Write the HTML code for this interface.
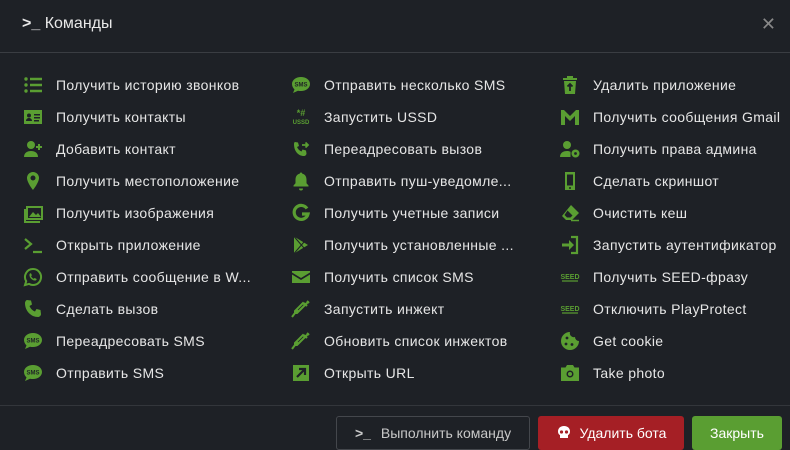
<!DOCTYPE html><html><head><meta charset="utf-8"><style>
*{margin:0;padding:0;box-sizing:border-box}
body{width:790px;height:448px;background:#1e2126;font-family:"Liberation Sans",sans-serif;color:#e6e6e6;position:relative;overflow:hidden}
.hd{position:absolute;left:22px;top:15px;font-size:16px;color:#e8e8e8}
.x{position:absolute;right:14px;top:14px;color:#888;font-size:18px}
.l1{position:absolute;left:0;right:0;top:52px;border-top:1px solid #3a3d42}
.l2{position:absolute;left:0;right:0;top:405px;border-top:1px solid #33363b}
.it{position:absolute;font-size:14px;letter-spacing:0.35px;height:20px;line-height:20px;white-space:nowrap}
.ic{position:absolute;width:24px;height:20px;display:flex;align-items:center;justify-content:center}
.ic svg{fill:#5a9e32;stroke:#5a9e32}
.b{position:absolute;top:416px;height:34px;border-radius:3px;font-size:14px;display:flex;align-items:center;justify-content:center;color:#fff}
</style></head><body>
<div class="hd"><span style="font-weight:bold">&gt;_</span> Команды</div>
<div class="x">✕</div>
<div class="l1"></div>
<div id="g"></div>
<div class="l2"></div>
<div class="b" style="left:336px;width:194px;border:1px solid #44474c;color:#c8c8c8;background:#1e2126"><b style="margin-right:10px">&gt;_</b>Выполнить команду</div>
<div class="b" style="left:538px;width:146px;background:#a51f25"><svg width="16" height="16" viewBox="0 0 16 16" style="margin-right:8px"><path fill="#fff" d="M8 1C4 1 2 3.5 2 6.5c0 2 1 3 2 3.6V13h8V10.1c1-.6 2-1.6 2-3.6C14 3.5 12 1 8 1z"/><circle cx="5.5" cy="7" r="1.6" fill="#a51f25"/><circle cx="10.5" cy="7" r="1.6" fill="#a51f25"/></svg>Удалить бота</div>
<div class="b" style="left:692px;width:90px;background:#5a9e32">Закрыть</div>
<script>
const I={
list:'<g stroke="none"><circle cx="3" cy="4" r="1.7"/><circle cx="3" cy="10" r="1.7"/><circle cx="3" cy="16" r="1.7"/></g><path stroke-width="2.4" d="M7 4h12M7 10h12M7 16h12"/>',
card:'<path stroke="none" d="M1 3h18v14H1z"/><g fill="#1e2126" stroke="none"><circle cx="6" cy="8.5" r="2"/><path d="M3 14c0-2 1.5-3 3-3s3 1 3 3zM11 7h6v1.5h-6zM11 10h6v1.5h-6zM11 13h5v1.5h-5z"/></g>',
uplus:'<g stroke="none"><circle cx="8" cy="6" r="4"/><path d="M1 18c0-4 3-6 7-6s7 2 7 6z"/></g><path stroke-width="2" d="M16 5v6M13 8h6"/>',
pin:'<path stroke="none" d="M10 1a6 6 0 0 0-6 6c0 4.5 6 12 6 12s6-7.5 6-12a6 6 0 0 0-6-6zm0 8.5a2.5 2.5 0 1 1 0-5 2.5 2.5 0 0 1 0 5z"/>',
img:'<path fill="none" stroke-width="2" d="M4 4h15v12H4z"/><path stroke="none" d="M1 6h2v12h14v2H1z M6 14l4-5 3 3 2-2 3 4z"/>',
term:'<path fill="none" stroke-width="2.2" d="M2 4l6 5-6 5M10 17h9"/>',
wa:'<path fill="none" stroke-width="2" d="M10 2a8 8 0 0 0-6.8 12.2L2 18l4-1.1A8 8 0 1 0 10 2z"/><path stroke="none" d="M7 6.5c.5-.5 1-.3 1.3.4l.6 1.4-.8 1c.6 1.2 1.5 2 2.6 2.5l1-.8 1.5.7c.6.3.5.9 0 1.4-1.5 1.3-4.5-.5-5.6-2S6 7.5 7 6.5z"/>',
phone:'<path stroke="none" d="M4 1l4 .5 1 4-2.5 1.5c1 2.5 3 4.5 5.5 5.5L13.5 10l4 1 .5 4c0 2-2 3-3 3C8 18 2 12 2 4c0-1 1-3 2-3z"/>',
sms:'<path stroke="none" d="M10 2c5 0 9 3 9 7s-4 7-9 7c-1 0-2 0-3-.3L2 18l1.5-3.5C2 13 1 11 1 9c0-4 4-7 9-7z"/><text x="10" y="11.5" font-size="6" font-weight="bold" text-anchor="middle" fill="#1e2126" stroke="none" font-family="Liberation Sans">SMS</text>',
ussd:'<text x="10" y="9" font-size="9" font-weight="bold" text-anchor="middle" stroke="none" font-family="Liberation Sans">*#</text><text x="10" y="17" font-size="6" font-weight="bold" text-anchor="middle" stroke="none" font-family="Liberation Sans">USSD</text>',
fwd:'<path stroke="none" d="M4 3l3 .5 1 3.5-2 1c.8 2 2.5 3.7 4.5 4.5l1-2 3.5 1 .5 3c0 1.5-1.5 2.5-2.5 2.5C7 17 3 12 3 5c0-1 .5-2 1-2z"/><path fill="none" stroke-width="1.8" d="M11 6h6M14.5 3.5L17 6l-2.5 2.5"/>',
bell:'<path stroke="none" d="M10 1.5c.8 0 1.3.6 1.3 1.3 3 .6 4.2 3 4.2 6v3.5l2 2.2v1H2.5v-1l2-2.2V8.8c0-3 1.2-5.4 4.2-6 0-.7.5-1.3 1.3-1.3zM8 17.5h4a2 2 0 0 1-4 0z"/>',
g:'<path fill="none" stroke-width="3.2" d="M16 5.5A7 7 0 1 0 17 11h-6"/>',
play:'<path stroke="none" d="M3 1.5l14 8.5-14 8.5z"/><path fill="#1e2126" stroke="#1e2126" stroke-width="1" d="M3 1.5L13 13M3 18.5L13 7"/>',
mail:'<path stroke="none" d="M1 4h18v1.5L10 11 1 5.5zM1 7.5l9 5.5 9-5.5V16H1z"/>',
syr:'<path fill="none" stroke-width="2" d="M16 2l2 2M17 3l-3 3M13 4l3 3M14 6l-8 8H4v-2l8-8zM4 14l-3 4"/><path stroke="none" d="M6 10l2 2-2 2-2-2z"/>',
ext:'<path stroke="none" d="M2 2h16v16H2z"/><path fill="none" stroke="#1e2126" stroke-width="2.2" d="M6 14l7-7M8 6h6v6"/>',
trash:'<path stroke="none" d="M7 1h6v2h4v2H3V3h4zM4 6h12l-1 13H5z"/><path fill="none" stroke="#1e2126" stroke-width="1.8" d="M10 16V9M7.5 11.5L10 9l2.5 2.5"/>',
gm:'<path stroke="none" d="M1 3h3l6 6 6-6h3v15h-4V9l-5 5-5-5v9H1z"/>',
ugear:'<g stroke="none"><circle cx="7" cy="6" r="4"/><path d="M0 18c0-4 3-6 7-6 1.5 0 2.7.3 3.5.8V18z"/><circle cx="15.5" cy="14.5" r="4"/></g><circle cx="15.5" cy="14.5" r="1.4" fill="#1e2126" stroke="none"/>',
mob:'<path stroke="none" d="M5 1h10v18H5z"/><path fill="#1e2126" stroke="none" d="M7 3.5h6v11H7z"/><circle cx="10" cy="17" r="1" fill="#1e2126" stroke="none"/>',
eras:'<path stroke="none" d="M11 2l8 8-7 7H6l-4-4z"/><path fill="#1e2126" stroke="none" d="M7.5 7.5l5 5-2 2H7l-2.5-2.5z"/><path stroke-width="1.5" d="M11 17.5h8"/>',
signin:'<path fill="none" stroke-width="2.2" d="M11 2h6v16h-6"/><path stroke="none" d="M2 8.5h7V5l5 5-5 5v-3.5H2z"/>',
seed:'<text x="10" y="12" font-size="7" font-weight="bold" text-anchor="middle" stroke="none" font-family="Liberation Sans">SEED</text><path stroke-width="1.2" d="M2 14h16"/>',
cookie:'<path stroke="none" d="M10 1a9 9 0 1 0 9 9 4 4 0 0 1-4-4 4 4 0 0 1-5-5z"/><g fill="#1e2126" stroke="none"><circle cx="7" cy="7" r="1.4"/><circle cx="6" cy="13" r="1.4"/><circle cx="12" cy="13.5" r="1.4"/></g>',
cam:'<path stroke="none" d="M7 2h6l1.5 2.5H19V18H1V4.5h4.5z"/><circle cx="10" cy="11" r="3.5" fill="#1e2126" stroke="none"/><circle cx="10" cy="11" r="2" stroke="none"/>'
};
const c=[[["Получить историю звонков","list"],["Получить контакты","card"],["Добавить контакт","uplus"],["Получить местоположение","pin"],["Получить изображения","img"],["Открыть приложение","term"],["Отправить сообщение в W...","wa"],["Сделать вызов","phone"],["Переадресовать SMS","sms"],["Отправить SMS","sms"]],
[["Отправить несколько SMS","sms"],["Запустить USSD","ussd"],["Переадресовать вызов","fwd"],["Отправить пуш-уведомле...","bell"],["Получить учетные записи","g"],["Получить установленные ...","play"],["Получить список SMS","mail"],["Запустить инжект","syr"],["Обновить список инжектов","syr"],["Открыть URL","ext"]],
[["Удалить приложение","trash"],["Получить сообщения Gmail","gm"],["Получить права админа","ugear"],["Сделать скриншот","mob"],["Очистить кеш","eras"],["Запустить аутентификатор","signin"],["Получить SEED-фразу","seed"],["Отключить PlayProtect","seed"],["Get cookie","cookie"],["Take photo","cam"]]];
const ix=[21,289,558],tx=[56,324,593];let h="";
c.forEach((col,i)=>col.forEach((t,j)=>{const y=75+j*32;
h+=`<div class="ic" style="left:${ix[i]}px;top:${y}px"><svg width="20" height="20" viewBox="0 0 20 20">${I[t[1]]}</svg></div><div class="it" style="left:${tx[i]}px;top:${y}px">${t[0]}</div>`}));
document.getElementById("g").innerHTML=h;
</script>
</body></html>
